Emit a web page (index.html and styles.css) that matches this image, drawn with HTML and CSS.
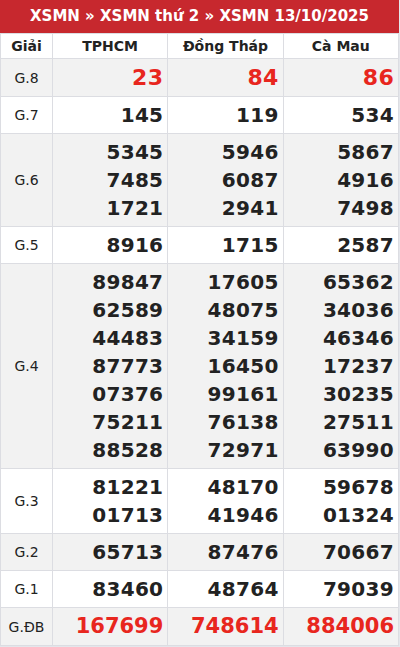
FILE: index.html
```html
<!DOCTYPE html>
<html lang="vi">
<head>
<meta charset="utf-8">
<link rel="stylesheet" href="styles.css">
</head>
<body>
<div class="box">
  <h2 class="title">XSMN » XSMN thứ 2 » XSMN 13/10/2025</h2>
  <table class="kq">
    <colgroup><col class="c-g"><col class="c-p"><col class="c-p"><col class="c-p"></colgroup>
    <thead>
      <tr><th>Giải</th><th>TPHCM</th><th>Đồng Tháp</th><th>Cà Mau</th></tr>
    </thead>
    <tbody>
      <tr class="alt"><td class="g">G.8</td><td class="n big red">23</td><td class="n big red">84</td><td class="n big red">86</td></tr>
      <tr><td class="g">G.7</td><td class="n">145</td><td class="n">119</td><td class="n">534</td></tr>
      <tr class="alt"><td class="g">G.6</td><td class="n">5345<br>7485<br>1721</td><td class="n">5946<br>6087<br>2941</td><td class="n">5867<br>4916<br>7498</td></tr>
      <tr><td class="g">G.5</td><td class="n">8916</td><td class="n">1715</td><td class="n">2587</td></tr>
      <tr class="alt"><td class="g">G.4</td><td class="n">89847<br>62589<br>44483<br>87773<br>07376<br>75211<br>88528</td><td class="n">17605<br>48075<br>34159<br>16450<br>99161<br>76138<br>72971</td><td class="n">65362<br>34036<br>46346<br>17237<br>30235<br>27511<br>63990</td></tr>
      <tr><td class="g">G.3</td><td class="n">81221<br>01713</td><td class="n">48170<br>41946</td><td class="n">59678<br>01324</td></tr>
      <tr class="alt"><td class="g">G.2</td><td class="n">65713</td><td class="n">87476</td><td class="n">70667</td></tr>
      <tr><td class="g">G.1</td><td class="n">83460</td><td class="n">48764</td><td class="n">79039</td></tr>
      <tr class="alt"><td class="g">G.ĐB</td><td class="n db red">167699</td><td class="n db red">748614</td><td class="n db red">884006</td></tr>
    </tbody>
  </table>
</div>
</body>
</html>
```
FILE: styles.css
```css
html, body {
  margin: 0;
  padding: 0;
}
body {
  background: #e4e6eb;
  font-family: "DejaVu Sans", sans-serif;
  color: #222;
}
.box {
  width: 399px;
  background: #fff;
}
.title {
  margin: 0;
  height: 33px;
  line-height: 33px;
  background: #c7282e;
  color: #fff;
  font-size: 15px;
  font-weight: bold;
  text-align: center;
}
.kq {
  width: 399px;
  border-collapse: collapse;
  table-layout: fixed;
  border-left: 1px solid #dcdde2;
}
.c-g { width: 52px; }
.kq th, .kq td {
  border: 1px solid #dcdde2;
  padding: 0;
}
.kq th {
  height: 24px;
  font-size: 14px;
  font-weight: bold;
  text-align: center;
  background: #fff;
  color: #222;
}
.kq tr.alt td { background: #f2f2f2; }
.kq td { background: #fff; }
.g {
  text-align: center;
  font-size: 14px;
  color: #222;
}
.n {
  text-align: right;
  padding: 4px 4px 4px 0 !important;
  font-size: 20px;
  font-weight: bold;
  line-height: 28px;
  letter-spacing: 0.3px;
}
.big { font-size: 22px; line-height: 29px; }
.db { font-size: 21px; line-height: 29px; letter-spacing: 0; }
.red { color: #e8261e; }
```
